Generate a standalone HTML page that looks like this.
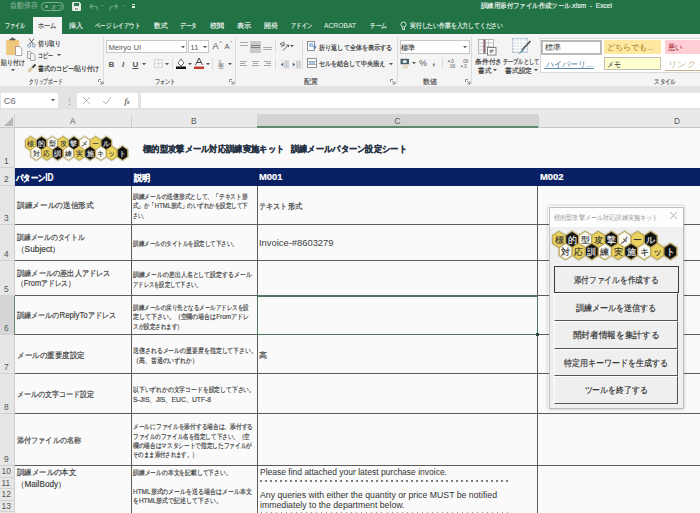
<!DOCTYPE html><html><head><meta charset="utf-8"><style>
html,body{margin:0;padding:0;}
body{width:700px;height:513px;overflow:hidden;position:relative;background:#fbfbfb;font-family:'Liberation Sans', sans-serif;}
.t{position:absolute;white-space:nowrap;-webkit-text-stroke:0.18px currentColor;}
.l{font-size:1.13em;}
.ns{-webkit-text-stroke:0;}
.r{position:absolute;box-sizing:border-box;}
svg{position:absolute;}
</style></head><body>
<div class="r" style="left:0px;top:0px;width:700px;height:34px;background:#217346;"></div>
<div class="t " id="f0" style="left:10px;top:1.26px;font-size:7.6px;line-height:9.879999999999999px;color:#79a98c;transform:scaleX(0.8625);transform-origin:0 50%;">自動保存</div>
<div class="r" style="left:41px;top:2px;width:23px;height:9px;border:1px solid #7fae93;border-radius:5px;"></div>
<div class="r" style="left:45px;top:5px;width:3px;height:3px;background:#7fae93;border-radius:50%;"></div>
<div class="t " style="left:51px;top:3.62px;font-size:5.5px;line-height:7.15px;color:#7fae93;">オフ</div>
<svg style="left:72px;top:2px" width="9" height="9"><path d="M0.5 0.5 H7.5 L8.5 1.5 V8.5 H0.5 Z" fill="#dcece2" stroke="#eef6f1" stroke-width="0.8"/><rect x="2" y="1" width="5" height="3" fill="#2e7a50"/><rect x="2" y="5.5" width="5" height="3" fill="#fff"/><rect x="3" y="6.5" width="3" height="1" fill="#444"/></svg>
<svg style="left:89px;top:3px" width="10" height="7"><path d="M3.5 0.8 L1 3.2 L3.5 5.6 M1.2 3.2 H6 a2.4 2.4 0 0 1 0 4.8 H5" fill="none" stroke="#6aa683" stroke-width="1.1"/></svg>
<svg style="left:109px;top:3px" width="10" height="7"><path d="M6 0.8 L8.5 3.2 L6 5.6 M8.3 3.2 H3.5 a2.4 2.4 0 0 0 0 4.8 H4.5" fill="none" stroke="#6aa683" stroke-width="1.1"/></svg>
<svg style="left:101.00px;top:4.67px" width="3" height="1.65"><path d="M0 0 H3 L1.5 1.65 Z" fill="#5e9a78"/></svg>
<svg style="left:121.50px;top:4.67px" width="3" height="1.65"><path d="M0 0 H3 L1.5 1.65 Z" fill="#5e9a78"/></svg>
<div class="r" style="left:131.5px;top:3.5px;width:3px;height:0.8px;background:#dfeee5;"></div>
<div class="r" style="left:131.5px;top:5.5px;width:3px;height:2.5px;background:#dfeee5;"></div>
<div class="t " id="f1" style="left:481px;top:1.05px;font-size:7.3px;line-height:9.49px;color:#e9f2ec;transform:scaleX(0.9135);transform-origin:0 50%;">訓練用添付ファイル作成ツール.xlsm&nbsp; - &nbsp;Excel</div>
<div class="r" style="left:33px;top:17px;width:29px;height:17px;background:#f4f4f4;"></div>
<div class="t " id="f2" style="left:5px;top:21.25px;font-size:7px;line-height:9.1px;color:#e6f0e9;transform:scaleX(0.7143);transform-origin:0 50%;">ファイル</div>
<div class="t " id="f3" style="left:38px;top:21.25px;font-size:7px;line-height:9.1px;color:#444;transform:scaleX(0.8810);transform-origin:0 50%;">ホーム</div>
<div class="t " id="f4" style="left:68.5px;top:21.25px;font-size:7px;line-height:9.1px;color:#e6f0e9;transform:scaleX(0.9857);transform-origin:0 50%;">挿入</div>
<div class="t " id="f5" style="left:95px;top:21.25px;font-size:7px;line-height:9.1px;color:#e6f0e9;transform:scaleX(0.7765);transform-origin:0 50%;">ページ レイアウト</div>
<div class="t " id="f6" style="left:153.5px;top:21.25px;font-size:7px;line-height:9.1px;color:#e6f0e9;transform:scaleX(0.9500);transform-origin:0 50%;">数式</div>
<div class="t " id="f7" style="left:180px;top:21.25px;font-size:7px;line-height:9.1px;color:#e6f0e9;transform:scaleX(0.8000);transform-origin:0 50%;">データ</div>
<div class="t " id="f8" style="left:209.5px;top:21.25px;font-size:7px;line-height:9.1px;color:#e6f0e9;transform:scaleX(1.0000);transform-origin:0 50%;">校閲</div>
<div class="t " id="f9" style="left:237px;top:21.25px;font-size:7px;line-height:9.1px;color:#e6f0e9;transform:scaleX(1.0000);transform-origin:0 50%;">表示</div>
<div class="t " id="f10" style="left:263.5px;top:21.25px;font-size:7px;line-height:9.1px;color:#e6f0e9;transform:scaleX(1.0000);transform-origin:0 50%;">開発</div>
<div class="t " id="f11" style="left:291px;top:21.25px;font-size:7px;line-height:9.1px;color:#e6f0e9;transform:scaleX(0.7500);transform-origin:0 50%;">アドイン</div>
<div class="t ns" id="f12" style="left:324px;top:21.25px;font-size:7px;line-height:9.1px;color:#e6f0e9;transform:scaleX(0.9602);transform-origin:0 50%;">ACROBAT</div>
<div class="t " id="f13" style="left:370px;top:21.25px;font-size:7px;line-height:9.1px;color:#e6f0e9;transform:scaleX(0.8095);transform-origin:0 50%;">チーム</div>
<svg style="left:400px;top:21px" width="7" height="10"><circle cx="3.5" cy="3.5" r="2.6" fill="none" stroke="#e6f0e9" stroke-width="0.9"/><path d="M2.5 6.5 V8.5 H4.5 V6.5" fill="none" stroke="#e6f0e9" stroke-width="0.9"/></svg>
<div class="t " id="f14" style="left:409.5px;top:21.25px;font-size:7px;line-height:9.1px;color:#e6f0e9;transform:scaleX(0.8304);transform-origin:0 50%;">実行したい作業を入力してください</div>
<div class="r" style="left:0px;top:34px;width:700px;height:52px;background:#f4f4f4;"></div>
<div class="r" style="left:0px;top:85.5px;width:700px;height:0.8px;background:#e0e0e0;"></div>
<div class="r" style="left:103px;top:37px;width:1px;height:47px;background:#dcdcdc;"></div>
<div class="r" style="left:235px;top:37px;width:1px;height:47px;background:#dcdcdc;"></div>
<div class="r" style="left:397px;top:37px;width:1px;height:47px;background:#dcdcdc;"></div>
<div class="r" style="left:471px;top:37px;width:1px;height:47px;background:#dcdcdc;"></div>
<div class="t " id="f15" style="left:29px;top:77.58px;font-size:6.8px;line-height:8.84px;color:#555;transform:scaleX(0.6837);transform-origin:0 50%;">クリップボード</div>
<div class="t " id="f16" style="left:165px;top:77.58px;font-size:6.8px;line-height:8.84px;color:#555;transform:translateX(-50%) scaleX(0.7500);transform-origin:50% 50%;">フォント</div>
<div class="t " id="f17" style="left:311px;top:77.58px;font-size:6.8px;line-height:8.84px;color:#555;transform:translateX(-50%) scaleX(1.0000);transform-origin:50% 50%;">配置</div>
<div class="t " id="f18" style="left:429.6px;top:77.58px;font-size:6.8px;line-height:8.84px;color:#555;transform:translateX(-50%) scaleX(1.0000);transform-origin:50% 50%;">数値</div>
<div class="t " id="f19" style="left:664.7px;top:77.58px;font-size:6.8px;line-height:8.84px;color:#555;transform:translateX(-50%) scaleX(0.7857);transform-origin:50% 50%;">スタイル</div>
<svg style="left:98px;top:79px" width="6" height="6"><path d="M0.5 0.5 H3 M0.5 0.5 V3 M2 2 L5 5 M5 2.5 V5 H2.5" fill="none" stroke="#777" stroke-width="0.8"/></svg>
<svg style="left:229px;top:79px" width="6" height="6"><path d="M0.5 0.5 H3 M0.5 0.5 V3 M2 2 L5 5 M5 2.5 V5 H2.5" fill="none" stroke="#777" stroke-width="0.8"/></svg>
<svg style="left:390px;top:79px" width="6" height="6"><path d="M0.5 0.5 H3 M0.5 0.5 V3 M2 2 L5 5 M5 2.5 V5 H2.5" fill="none" stroke="#777" stroke-width="0.8"/></svg>
<svg style="left:465px;top:79px" width="6" height="6"><path d="M0.5 0.5 H3 M0.5 0.5 V3 M2 2 L5 5 M5 2.5 V5 H2.5" fill="none" stroke="#777" stroke-width="0.8"/></svg>
<svg style="left:5px;top:37px" width="20" height="20"><rect x="1.2" y="3" width="13" height="15" fill="#f0c77c"/><path d="M4.5 3.2 H10.5 V1.8 H8.8 a1.3 1.3 0 0 0 -2.6 0 H4.5 Z" fill="#555"/><path d="M10.5 9.5 H14.5 L16.8 12 V18.5 H10.5 Z" fill="#fff" stroke="#8a8a8a" stroke-width="0.7"/></svg>
<div class="t " id="f20" style="left:0.5px;top:57.65px;font-size:7px;line-height:9.1px;color:#333;transform:scaleX(0.8393);transform-origin:0 50%;">貼り付け</div>
<svg style="left:11.00px;top:68.90px" width="4" height="2.20"><path d="M0 0 H4 L2.0 2.20 Z" fill="#555"/></svg>
<svg style="left:27px;top:37.5px" width="9" height="10"><path d="M2 0.5 L6.2 6 M7 0.5 L2.8 6" stroke="#555" stroke-width="0.9"/><circle cx="2.2" cy="7.6" r="1.5" fill="none" stroke="#6f8ca8" stroke-width="0.9"/><circle cx="6.8" cy="7.6" r="1.5" fill="none" stroke="#6f8ca8" stroke-width="0.9"/></svg>
<div class="t " id="f21" style="left:37.5px;top:38.65px;font-size:7px;line-height:9.1px;color:#333;transform:scaleX(0.8214);transform-origin:0 50%;">切り取り</div>
<svg style="left:27px;top:50.5px" width="9" height="10"><path d="M0.5 0.5 H3.5 L5 2 V7.5 H0.5 Z" fill="#eee" stroke="#8a8a8a" stroke-width="0.7"/><path d="M3.5 2.5 H6.5 L8 4 V9.5 H3.5 Z" fill="#f4f4f4" stroke="#8a8a8a" stroke-width="0.7"/></svg>
<div class="t " id="f22" style="left:37.5px;top:50.65px;font-size:7px;line-height:9.1px;color:#333;transform:scaleX(0.7143);transform-origin:0 50%;">コピー</div>
<svg style="left:56.50px;top:53.90px" width="4" height="2.20"><path d="M0 0 H4 L2.0 2.20 Z" fill="#555"/></svg>
<svg style="left:27px;top:63px" width="10" height="10"><path d="M1.5 8.5 L5.5 4.5" stroke="#d8c59a" stroke-width="2.6"/><path d="M5.5 4.5 L8.5 1.5" stroke="#3a3a3a" stroke-width="1.8"/></svg>
<div class="t " id="f23" style="left:37.5px;top:64.15px;font-size:7px;line-height:9.1px;color:#333;transform:scaleX(0.8478);transform-origin:0 50%;">書式のコピー/貼り付け</div>
<div class="r" style="left:106px;top:40px;width:81px;height:13px;background:#fff;border:1px solid #c6c6c6;"></div>
<div class="t ns" style="left:108.5px;top:43.06px;font-size:7.6px;line-height:9.879999999999999px;color:#555;">Meiryo UI</div>
<svg style="left:180.50px;top:45.70px" width="4" height="2.20"><path d="M0 0 H4 L2.0 2.20 Z" fill="#555"/></svg>
<div class="r" style="left:188px;top:40px;width:21px;height:13px;background:#fff;border:1px solid #c6c6c6;"></div>
<div class="t ns" style="left:190.5px;top:43.06px;font-size:7.6px;line-height:9.879999999999999px;color:#555;">11</div>
<svg style="left:202.50px;top:45.70px" width="4" height="2.20"><path d="M0 0 H4 L2.0 2.20 Z" fill="#555"/></svg>
<div class="t ns" style="left:212.5px;top:40.85px;font-size:9px;line-height:11.700000000000001px;color:#555;">A</div>
<div class="t ns" style="left:219.5px;top:40.45px;font-size:5px;line-height:6.5px;color:#555;">^</div>
<div class="t ns" style="left:224.5px;top:42.26px;font-size:7.6px;line-height:9.879999999999999px;color:#555;">A</div>
<div class="t ns" style="left:230.5px;top:40.45px;font-size:5px;line-height:6.5px;color:#555;">ˇ</div>
<div class="t ns" style="left:108.5px;top:60.00px;font-size:8px;line-height:10.4px;color:#555;font-weight:bold;">B</div>
<div class="t ns" style="left:122px;top:60.00px;font-size:8px;line-height:10.4px;color:#555;font-weight:bold;"><i>I</i></div>
<div class="t ns" style="left:132.5px;top:60.00px;font-size:8px;line-height:10.4px;color:#555;font-weight:bold;"><u>U</u></div>
<svg style="left:141.50px;top:62.90px" width="4" height="2.20"><path d="M0 0 H4 L2.0 2.20 Z" fill="#555"/></svg>
<svg style="left:154px;top:59px" width="9" height="9"><rect x="0.5" y="0.5" width="8" height="8" fill="none" stroke="#aaa" stroke-width="0.8" stroke-dasharray="1 1"/><path d="M4.5 0.5 V8.5 M0.5 4.5 H8.5" stroke="#bbb" stroke-width="0.8" stroke-dasharray="1 1"/></svg>
<svg style="left:164.50px;top:62.90px" width="4" height="2.20"><path d="M0 0 H4 L2.0 2.20 Z" fill="#555"/></svg>
<div class="r" style="left:172px;top:58px;width:1px;height:12px;background:#dcdcdc;"></div>
<svg style="left:176px;top:57px" width="10" height="12"><path d="M2 6 L5 2 L8 6 L5 9 Z" fill="#fff" stroke="#444" stroke-width="0.8"/><rect x="0" y="9.5" width="10" height="2.5" fill="#111"/></svg>
<svg style="left:187.50px;top:62.90px" width="4" height="2.20"><path d="M0 0 H4 L2.0 2.20 Z" fill="#555"/></svg>
<svg style="left:194px;top:57px" width="10" height="12"><path d="M1.5 8 L5 1 L8.5 8 M3 5.5 H7" fill="none" stroke="#444" stroke-width="1"/><rect x="0" y="9.5" width="10" height="2.5" fill="#c0392b"/></svg>
<svg style="left:205.50px;top:62.90px" width="4" height="2.20"><path d="M0 0 H4 L2.0 2.20 Z" fill="#555"/></svg>
<div class="r" style="left:212px;top:58px;width:1px;height:12px;background:#dcdcdc;"></div>
<div class="t ns" style="left:218.5px;top:58.45px;font-size:5px;line-height:6.5px;color:#777;">z</div>
<div class="t " style="left:217.5px;top:63.30px;font-size:6px;line-height:7.800000000000001px;color:#888;">亜</div>
<svg style="left:227.50px;top:62.90px" width="4" height="2.20"><path d="M0 0 H4 L2.0 2.20 Z" fill="#555"/></svg>
<div class="r" style="left:249.5px;top:40.5px;width:11.5px;height:12px;background:#c9c9c9;"></div>
<div class="r" style="left:239.5px;top:42px;width:8.5px;height:1.2px;background:#aaa;"></div>
<div class="r" style="left:239.5px;top:44.6px;width:8.5px;height:1.2px;background:#aaa;"></div>
<div class="r" style="left:250.5px;top:44.5px;width:9.5px;height:1.2px;background:#808080;"></div>
<div class="r" style="left:250.5px;top:47.1px;width:9.5px;height:1.2px;background:#808080;"></div>
<div class="r" style="left:263px;top:46.5px;width:9px;height:1.2px;background:#aaa;"></div>
<div class="r" style="left:263px;top:49.1px;width:9px;height:1.2px;background:#aaa;"></div>
<svg style="left:279px;top:41px" width="11" height="10"><path d="M1 3 L5 1 L5 5 Z M2 6 L6 3" fill="none" stroke="#666" stroke-width="0.9"/><path d="M4 9.5 L9.5 4 M7.5 4 H9.5 V6" fill="none" stroke="#555" stroke-width="1"/></svg>
<svg style="left:290.20px;top:45.10px" width="4" height="2.20"><path d="M0 0 H4 L2.0 2.20 Z" fill="#555"/></svg>
<div class="r" style="left:275.3px;top:40px;width:0.8px;height:13px;background:#dcdcdc;"></div>
<div class="r" style="left:275.3px;top:58px;width:0.8px;height:12px;background:#dcdcdc;"></div>
<div class="r" style="left:302px;top:41px;width:0.8px;height:29px;background:#dcdcdc;"></div>
<div class="r" style="left:240px;top:61px;width:7px;height:1.2px;background:#a6a6a6;"></div>
<div class="r" style="left:240px;top:63px;width:5px;height:1.2px;background:#a6a6a6;"></div>
<div class="r" style="left:240px;top:65px;width:7px;height:1.2px;background:#a6a6a6;"></div>
<div class="r" style="left:252.0px;top:61px;width:7px;height:1.2px;background:#a6a6a6;"></div>
<div class="r" style="left:253.0px;top:63px;width:5px;height:1.2px;background:#a6a6a6;"></div>
<div class="r" style="left:252.0px;top:65px;width:7px;height:1.2px;background:#a6a6a6;"></div>
<div class="r" style="left:264px;top:61px;width:7px;height:1.2px;background:#a6a6a6;"></div>
<div class="r" style="left:266px;top:63px;width:5px;height:1.2px;background:#a6a6a6;"></div>
<div class="r" style="left:264px;top:65px;width:7px;height:1.2px;background:#a6a6a6;"></div>
<svg style="left:279.5px;top:59.5px" width="9" height="9"><rect x="0" y="0.5" width="9" height="8" fill="#d2d2d2"/><rect x="0" y="0.5" width="4" height="8" fill="#f2f2f2"/><path d="M3.2 2.5 L0.8 4.5 L3.2 6.5 Z" fill="#4a6a8a"/></svg>
<svg style="left:292px;top:59.5px" width="9" height="9"><rect x="0" y="0.5" width="9" height="8" fill="#d2d2d2"/><rect x="0" y="0.5" width="4" height="8" fill="#f2f2f2"/><path d="M0.8 2.5 L3.2 4.5 L0.8 6.5 Z" fill="#4a6a8a"/></svg>
<svg style="left:307px;top:41px" width="10" height="11"><rect x="0.5" y="0.5" width="7" height="9" fill="#fff" stroke="#777" stroke-width="0.8"/><path d="M2 3 H6 M2 5 H8 a1 1 0 0 1 0 2 H6" fill="none" stroke="#2a6ebd" stroke-width="0.8"/></svg>
<div class="t " id="f24" style="left:318.5px;top:42.85px;font-size:7px;line-height:9.1px;color:#333;transform:scaleX(0.8750);transform-origin:0 50%;">折り返して全体を表示する</div>
<svg style="left:307px;top:58px" width="10" height="11"><rect x="0.5" y="0.5" width="9" height="9" fill="#fff" stroke="#777" stroke-width="0.8"/><path d="M0.5 3.5 H9.5 M0.5 6.5 H9.5" stroke="#999" stroke-width="0.8"/><path d="M2 5 H8" stroke="#2a6ebd" stroke-width="0.8"/></svg>
<div class="t " id="f25" style="left:319px;top:59.25px;font-size:7px;line-height:9.1px;color:#333;transform:scaleX(0.8636);transform-origin:0 50%;">セルを結合して中央揃え</div>
<svg style="left:388.50px;top:62.50px" width="4" height="2.20"><path d="M0 0 H4 L2.0 2.20 Z" fill="#555"/></svg>
<div class="r" style="left:399.5px;top:40px;width:70px;height:14px;background:#fff;border:1px solid #c6c6c6;"></div>
<div class="t " style="left:401px;top:43.91px;font-size:6.6px;line-height:8.58px;color:#444;">標準</div>
<svg style="left:462.50px;top:45.90px" width="4" height="2.20"><path d="M0 0 H4 L2.0 2.20 Z" fill="#555"/></svg>
<svg style="left:400px;top:58px" width="10" height="11"><rect x="0.5" y="0.8" width="8.5" height="5.5" fill="#46606e"/><ellipse cx="4.75" cy="3.55" rx="2.2" ry="1.4" fill="#fff"/><rect x="3" y="6.5" width="5" height="4" fill="#e9dcc0"/></svg>
<svg style="left:411.50px;top:61.90px" width="4" height="2.20"><path d="M0 0 H4 L2.0 2.20 Z" fill="#555"/></svg>
<div class="t ns" style="left:419px;top:58.35px;font-size:9px;line-height:11.700000000000001px;color:#555;">%</div>
<div class="t ns" style="left:432.5px;top:56.65px;font-size:9px;line-height:11.700000000000001px;color:#444;font-weight:bold;">,</div>
<div class="r" style="left:441.5px;top:58px;width:0.8px;height:12px;background:#dcdcdc;"></div>
<svg style="left:447px;top:58px" width="9" height="11"><path d="M0.5 3.2 L2.5 2 L2.5 4.4 Z" fill="#4a6a8a"/><text x="3" y="5" font-size="4.5" fill="#555" font-family="Liberation Sans">.0</text><text x="2" y="10" font-size="4.5" fill="#555" font-family="Liberation Sans">.00</text></svg>
<svg style="left:460px;top:58px" width="10" height="11"><text x="2" y="5" font-size="4.5" fill="#555" font-family="Liberation Sans">.00</text><path d="M0.5 8.2 L2.5 7 L2.5 9.4 Z" fill="#4a6a8a"/><text x="3" y="10" font-size="4.5" fill="#555" font-family="Liberation Sans">.0</text></svg>
<svg style="left:478px;top:39px" width="20" height="17"><rect x="0.5" y="0.5" width="15" height="14" fill="#fafafa" stroke="#9a9a9a" stroke-width="0.7"/><path d="M0.5 4 H15.5 M0.5 7.5 H15.5 M0.5 11 H15.5 M5.5 0.5 V14.5 M10.5 0.5 V14.5" stroke="#b8b8b8" stroke-width="0.7"/><rect x="5.5" y="0.5" width="2" height="14" fill="#8a6670"/><rect x="9.5" y="8.5" width="8.5" height="7.5" fill="#fff" stroke="#666" stroke-width="0.8"/><path d="M12 14 L15 10 M11.5 11.5 H15.5 M11.5 13 H15.5" stroke="#444" stroke-width="0.6"/></svg>
<div class="t " id="f26" style="left:474.5px;top:57.45px;font-size:7px;line-height:9.1px;color:#3c3c3c;transform:scaleX(0.9643);transform-origin:0 50%;">条件付き</div>
<div class="t " id="f27" style="left:478px;top:65.65px;font-size:7px;line-height:9.1px;color:#3c3c3c;transform:scaleX(0.9286);transform-origin:0 50%;">書式</div>
<svg style="left:493.00px;top:68.90px" width="4" height="2.20"><path d="M0 0 H4 L2.0 2.20 Z" fill="#555"/></svg>
<svg style="left:512px;top:38px" width="20" height="18"><rect x="0.5" y="0.5" width="15" height="14" fill="#e4e9f0" stroke="#a9b6c8" stroke-width="0.7"/><path d="M0.5 3.5 H15.5 M0.5 6.5 H15.5 M0.5 9.5 H15.5 M0.5 12.5 H15.5 M4 0.5 V14.5 M7.5 0.5 V14.5 M11 0.5 V14.5" stroke="#fff" stroke-width="0.8"/><path d="M10 12 L18.5 3" stroke="#555" stroke-width="1.8"/><path d="M6 16.5 L10.5 11 L12 13 Z" fill="#6c94a8"/></svg>
<div class="t " id="f28" style="left:502.5px;top:57.45px;font-size:7px;line-height:9.1px;color:#3c3c3c;transform:scaleX(0.7347);transform-origin:0 50%;">テーブルとして</div>
<div class="t " id="f29" style="left:504.6px;top:65.65px;font-size:7px;line-height:9.1px;color:#3c3c3c;transform:scaleX(0.9643);transform-origin:0 50%;">書式設定</div>
<svg style="left:534.00px;top:68.90px" width="4" height="2.20"><path d="M0 0 H4 L2.0 2.20 Z" fill="#555"/></svg>
<div class="r" style="left:539.5px;top:38px;width:161px;height:35px;background:#fff;border:1px solid #d8d8d8;"></div>
<div class="r" style="left:541px;top:39.5px;width:60.5px;height:15px;background:#fff;border:2px solid #b9b9b9;"></div>
<div class="t ns" id="f30" style="left:545px;top:42.60px;font-size:8px;line-height:10.4px;color:#3a3a3a;transform:scaleX(1.0000);transform-origin:0 50%;">標準</div>
<div class="r" style="left:603.5px;top:40px;width:57px;height:14px;background:#ffe9a0;"></div>
<div class="t ns" id="f31" style="left:607px;top:42.60px;font-size:8px;line-height:10.4px;color:#9c7010;transform:scaleX(1.0070);transform-origin:0 50%;">どちらでも...</div>
<div class="r" style="left:664.5px;top:40px;width:40px;height:14px;background:#ffcdd3;"></div>
<div class="t ns" id="f32" style="left:668px;top:42.60px;font-size:8px;line-height:10.4px;color:#9c1020;transform:scaleX(0.9062);transform-origin:0 50%;">悪い</div>
<div class="t ns" id="f33" style="left:545.6px;top:59.60px;font-size:8px;line-height:10.4px;color:#4a7a9a;transform:scaleX(1.0070);transform-origin:0 50%;">ハイパーリ...</div>
<div class="r" style="left:544px;top:68.2px;width:50px;height:1px;background:#5a8aaa;"></div>
<div class="r" style="left:603.5px;top:56.5px;width:57px;height:13px;background:#ffffd0;border:1px solid #c0c0b0;"></div>
<div class="t ns" id="f34" style="left:607px;top:59.60px;font-size:8px;line-height:10.4px;color:#333;transform:scaleX(0.8750);transform-origin:0 50%;">メモ</div>
<div class="t ns" id="f35" style="left:668px;top:59.60px;font-size:8px;line-height:10.4px;color:#cdb28a;transform:scaleX(1.1684);transform-origin:0 50%;">リンク セ</div>
<div class="r" style="left:665px;top:69.5px;width:40px;height:1.5px;background:#cbb08a;"></div>
<div class="r" style="left:0px;top:86px;width:700px;height:28px;background:#e3e3e3;"></div>
<div class="r" style="left:1px;top:93px;width:57px;height:15px;background:#fff;"></div>
<div class="t ns" style="left:3.8px;top:96.22px;font-size:9.2px;line-height:11.959999999999999px;color:#6a6a6a;">C6</div>
<svg style="left:50.50px;top:99.40px" width="4" height="2.20"><path d="M0 0 H4 L2.0 2.20 Z" fill="#555"/></svg>
<div class="t " style="left:65.5px;top:97.15px;font-size:7px;line-height:9.1px;color:#888;">⋮</div>
<div class="r" style="left:77px;top:93px;width:61px;height:15px;background:#fff;"></div>
<svg style="left:82px;top:96px" width="9" height="9"><path d="M1 1 L8 8 M8 1 L1 8" stroke="#b0b0b0" stroke-width="0.9"/></svg>
<svg style="left:102px;top:96px" width="10" height="9"><path d="M1 5 L4 8 L9 1" fill="none" stroke="#b0b0b0" stroke-width="0.9"/></svg>
<div class="t " style="left:124.5px;top:96.17px;font-size:8.5px;line-height:11.05px;color:#555;"><i style="font-family:Liberation Serif">f</i><span style="font-size:5px"><i>x</i></span></div>
<div class="r" style="left:141px;top:93px;width:559px;height:15px;background:#fff;"></div>
<div class="r" style="left:0px;top:109.5px;width:700px;height:18.5px;background:#e9e9e9;"></div>
<div class="r" style="left:0px;top:127px;width:700px;height:1px;background:#c8c8c8;"></div>
<div class="r" style="left:14px;top:114px;width:1px;height:14px;background:#d0d0d0;"></div>
<div class="r" style="left:131px;top:116px;width:1px;height:11px;background:#cfcfcf;"></div>
<div class="r" style="left:257px;top:114px;width:281px;height:13px;background:#d3d3d3;"></div>
<div class="r" style="left:257px;top:126.3px;width:281px;height:1.7px;background:#5f8a70;"></div>
<div class="r" style="left:538px;top:116px;width:1px;height:11px;background:#cfcfcf;"></div>
<svg style="left:2px;top:116px" width="12" height="11"><path d="M11 1 V10 H2 Z" fill="#b5b5b5"/></svg>
<div class="t ns" style="left:70px;top:115.64px;font-size:8.4px;line-height:10.920000000000002px;color:#5a5a5a;">A</div>
<div class="t ns" style="left:191px;top:115.64px;font-size:8.4px;line-height:10.920000000000002px;color:#5a5a5a;">B</div>
<div class="t ns" style="left:394.5px;top:115.64px;font-size:8.4px;line-height:10.920000000000002px;color:#5a5a5a;">C</div>
<div class="t ns" style="left:674px;top:115.64px;font-size:8.4px;line-height:10.920000000000002px;color:#5a5a5a;">D</div>
<div class="r" style="left:0px;top:128px;width:15px;height:385px;background:#e6e6e6;"></div>
<div class="r" style="left:14px;top:128px;width:1px;height:385px;background:#cfcfcf;"></div>
<div class="r" style="left:0px;top:167px;width:14px;height:1px;background:#d2d2d2;"></div>
<div class="t ns" style="left:4px;top:155.74px;font-size:8.4px;line-height:10.920000000000002px;color:#555;">1</div>
<div class="r" style="left:0px;top:185px;width:14px;height:1px;background:#d2d2d2;"></div>
<div class="t ns" style="left:4px;top:173.74px;font-size:8.4px;line-height:10.920000000000002px;color:#555;">2</div>
<div class="r" style="left:0px;top:224px;width:14px;height:1px;background:#d2d2d2;"></div>
<div class="t ns" style="left:4px;top:212.74px;font-size:8.4px;line-height:10.920000000000002px;color:#555;">3</div>
<div class="r" style="left:0px;top:260px;width:14px;height:1px;background:#d2d2d2;"></div>
<div class="t ns" style="left:4px;top:248.74px;font-size:8.4px;line-height:10.920000000000002px;color:#555;">4</div>
<div class="r" style="left:0px;top:295px;width:14px;height:1px;background:#d2d2d2;"></div>
<div class="t ns" style="left:4px;top:283.74px;font-size:8.4px;line-height:10.920000000000002px;color:#555;">5</div>
<div class="r" style="left:0px;top:296px;width:14px;height:39px;background:#d6d6d6;"></div>
<div class="r" style="left:13.5px;top:296px;width:1.5px;height:39px;background:#5f8a70;"></div>
<div class="r" style="left:0px;top:334px;width:14px;height:1px;background:#d2d2d2;"></div>
<div class="t ns" style="left:4px;top:322.74px;font-size:8.4px;line-height:10.920000000000002px;color:#4d6a5c;">6</div>
<div class="r" style="left:0px;top:373px;width:14px;height:1px;background:#d2d2d2;"></div>
<div class="t ns" style="left:4px;top:361.74px;font-size:8.4px;line-height:10.920000000000002px;color:#555;">7</div>
<div class="r" style="left:0px;top:413px;width:14px;height:1px;background:#d2d2d2;"></div>
<div class="t ns" style="left:4px;top:401.74px;font-size:8.4px;line-height:10.920000000000002px;color:#555;">8</div>
<div class="r" style="left:0px;top:465px;width:14px;height:1px;background:#d2d2d2;"></div>
<div class="t ns" style="left:4px;top:453.74px;font-size:8.4px;line-height:10.920000000000002px;color:#555;">9</div>
<div class="r" style="left:0px;top:476.5px;width:14px;height:1px;background:#d2d2d2;"></div>
<div class="t ns" style="left:1.5px;top:466.04px;font-size:8.4px;line-height:10.920000000000002px;color:#555;">10</div>
<div class="r" style="left:0px;top:488px;width:14px;height:1px;background:#d2d2d2;"></div>
<div class="t ns" style="left:1.5px;top:477.54px;font-size:8.4px;line-height:10.920000000000002px;color:#555;">11</div>
<div class="r" style="left:0px;top:499.5px;width:14px;height:1px;background:#d2d2d2;"></div>
<div class="t ns" style="left:1.5px;top:489.04px;font-size:8.4px;line-height:10.920000000000002px;color:#555;">12</div>
<div class="r" style="left:0px;top:511px;width:14px;height:1px;background:#d2d2d2;"></div>
<div class="t ns" style="left:1.5px;top:500.54px;font-size:8.4px;line-height:10.920000000000002px;color:#555;">13</div>
<div class="r" style="left:15px;top:128px;width:685px;height:385px;background:#fafafa;"></div>
<div class="r" style="left:15px;top:168px;width:685px;height:18px;background:#0a2064;"></div>
<div class="r" style="left:257px;top:168px;width:1px;height:18px;background:#08174a;"></div>
<div class="r" style="left:131px;top:168px;width:1px;height:18px;background:#08174a;"></div>
<div class="t " id="f36" style="left:16.4px;top:172.35px;font-size:9px;line-height:11.700000000000001px;color:#fff;font-weight:bold;transform:scaleX(0.8125);transform-origin:0 50%;">パターン<span class="l">ID</span></div>
<div class="t " id="f37" style="left:133.5px;top:172.61px;font-size:8.6px;line-height:11.18px;color:#fff;font-weight:bold;transform:scaleX(0.9167);transform-origin:0 50%;">説明</div>
<div class="t " id="f38" style="left:259.4px;top:172.48px;font-size:8.8px;line-height:11.440000000000001px;color:#fff;font-weight:bold;transform:scaleX(1.0674);transform-origin:0 50%;">M001</div>
<div class="t " id="f39" style="left:540px;top:172.48px;font-size:8.8px;line-height:11.440000000000001px;color:#fff;font-weight:bold;transform:scaleX(1.0674);transform-origin:0 50%;">M002</div>
<div class="r" style="left:15px;top:224px;width:685px;height:1px;background:#5c5c5c;"></div>
<div class="r" style="left:15px;top:260px;width:685px;height:1px;background:#5c5c5c;"></div>
<div class="r" style="left:15px;top:295px;width:685px;height:1px;background:#5c5c5c;"></div>
<div class="r" style="left:15px;top:334px;width:685px;height:1px;background:#5c5c5c;"></div>
<div class="r" style="left:15px;top:373px;width:685px;height:1px;background:#5c5c5c;"></div>
<div class="r" style="left:15px;top:413px;width:685px;height:1px;background:#5c5c5c;"></div>
<div class="r" style="left:15px;top:465px;width:685px;height:1px;background:#5c5c5c;"></div>
<div class="r" style="left:131px;top:186px;width:1px;height:327px;background:#5c5c5c;"></div>
<div class="r" style="left:257px;top:186px;width:1px;height:327px;background:#5c5c5c;"></div>
<div class="r" style="left:537px;top:186px;width:1px;height:327px;background:#5c5c5c;"></div>
<div class="r" style="left:257px;top:295px;width:281px;height:1.6px;background:#4d7a5f;"></div>
<div class="r" style="left:257px;top:333.5px;width:281px;height:1.6px;background:#4d7a5f;"></div>
<div class="r" style="left:256.6px;top:295px;width:1.6px;height:40px;background:#4d7a5f;"></div>
<div class="r" style="left:536.5px;top:295px;width:1.6px;height:40px;background:#4d7a5f;"></div>
<div class="r" style="left:535.5px;top:332.5px;width:3px;height:3px;background:#2d4a3a;"></div>
<div class="t " id="f40" style="left:16.5px;top:201.13px;font-size:7.8px;line-height:10.14px;color:#404040;transform:scaleX(0.9563);transform-origin:0 50%;">訓練メールの送信形式</div>
<div class="t " id="f41" style="left:16.5px;top:232.93px;font-size:7.8px;line-height:10.14px;color:#404040;transform:scaleX(0.8438);transform-origin:0 50%;">訓練メールのタイトル</div>
<div class="t " id="f42" style="left:16.5px;top:243.53px;font-size:7.8px;line-height:10.14px;color:#404040;transform:scaleX(0.9483);transform-origin:0 50%;">（<span class="l">Subject</span>）</div>
<div class="t " id="f43" style="left:16.5px;top:268.63px;font-size:7.8px;line-height:10.14px;color:#404040;transform:scaleX(0.8990);transform-origin:0 50%;">訓練メールの差出人アドレス</div>
<div class="t " id="f44" style="left:16.5px;top:278.43px;font-size:7.8px;line-height:10.14px;color:#404040;transform:scaleX(0.8463);transform-origin:0 50%;">（<span class="l">From</span>アドレス）</div>
<div class="t " id="f45" style="left:16.5px;top:310.33px;font-size:7.8px;line-height:10.14px;color:#404040;transform:scaleX(0.8857);transform-origin:0 50%;">訓練メールの<span class="l">ReplyTo</span>アドレス</div>
<div class="t " id="f46" style="left:16.5px;top:350.73px;font-size:7.8px;line-height:10.14px;color:#404040;transform:scaleX(0.9444);transform-origin:0 50%;">メールの重要度設定</div>
<div class="t " id="f47" style="left:16.5px;top:389.73px;font-size:7.8px;line-height:10.14px;color:#404040;transform:scaleX(0.8807);transform-origin:0 50%;">メールの文字コード設定</div>
<div class="t " id="f48" style="left:16.5px;top:436.13px;font-size:7.8px;line-height:10.14px;color:#404040;transform:scaleX(0.8889);transform-origin:0 50%;">添付ファイルの名称</div>
<div class="t " id="f49" style="left:16.5px;top:467.93px;font-size:7.8px;line-height:10.14px;color:#404040;transform:scaleX(0.9250);transform-origin:0 50%;">訓練メールの本文</div>
<div class="t " id="f50" style="left:16.5px;top:478.73px;font-size:7.8px;line-height:10.14px;color:#404040;transform:scaleX(0.9293);transform-origin:0 50%;">（<span class="l">MailBody</span>）</div>
<div class="t " id="f51" style="left:133px;top:191.70px;font-size:6.7px;line-height:9.4px;color:#444;transform:scaleX(0.8179);transform-origin:0 50%;">訓練メールの送信形式として、「テキスト形</div>
<div class="t " id="f52" style="left:133px;top:201.10px;font-size:6.7px;line-height:9.4px;color:#444;transform:scaleX(0.7811);transform-origin:0 50%;">式」か「<span class="l">HTML</span>形式」のいずれかを設定して下</div>
<div class="t " id="f53" style="left:133px;top:210.50px;font-size:6.7px;line-height:9.4px;color:#444;transform:scaleX(0.6667);transform-origin:0 50%;">さい。</div>
<div class="t " id="f54" style="left:133px;top:239.20px;font-size:6.7px;line-height:9.4px;color:#444;transform:scaleX(0.7895);transform-origin:0 50%;">訓練メールのタイトルを設定して下さい。</div>
<div class="t " id="f55" style="left:133px;top:269.90px;font-size:6.7px;line-height:10px;color:#444;transform:scaleX(0.8500);transform-origin:0 50%;">訓練メールの差出人名として設定するメール</div>
<div class="t " id="f56" style="left:133px;top:279.90px;font-size:6.7px;line-height:10px;color:#444;transform:scaleX(0.7527);transform-origin:0 50%;">アドレスを設定して下さい。</div>
<div class="t " id="f57" style="left:133px;top:302.70px;font-size:6.7px;line-height:9.4px;color:#444;transform:scaleX(0.7891);transform-origin:0 50%;">訓練メールの戻り先となるメールアドレスを設</div>
<div class="t " id="f58" style="left:133px;top:312.10px;font-size:6.7px;line-height:9.4px;color:#444;transform:scaleX(0.8488);transform-origin:0 50%;">定して下さい。（空欄の場合は<span class="l">From</span>アドレ</div>
<div class="t " id="f59" style="left:133px;top:321.50px;font-size:6.7px;line-height:9.4px;color:#444;transform:scaleX(0.7937);transform-origin:0 50%;">スが設定されます）</div>
<div class="t " id="f60" style="left:133px;top:346.30px;font-size:6.7px;line-height:9.4px;color:#444;transform:scaleX(0.8435);transform-origin:0 50%;">送信されるメールの重要度を指定して下さい。</div>
<div class="t " id="f61" style="left:133px;top:355.70px;font-size:6.7px;line-height:9.4px;color:#444;transform:scaleX(0.8442);transform-origin:0 50%;">（高、普通のいずれか）</div>
<div class="t " id="f62" style="left:133px;top:385.40px;font-size:6.7px;line-height:9.4px;color:#444;transform:scaleX(0.8299);transform-origin:0 50%;">以下いずれかの文字コードを設定して下さい。</div>
<div class="t " id="f63" style="left:133px;top:394.80px;font-size:6.7px;line-height:9.4px;color:#444;transform:scaleX(0.8879);transform-origin:0 50%;"><span class="l">S-JIS</span>、<span class="l">JIS</span>、<span class="l">EUC</span>、<span class="l">UTF-8</span></div>
<div class="t " id="f64" style="left:133px;top:422.10px;font-size:6.7px;line-height:9.4px;color:#444;transform:scaleX(0.8163);transform-origin:0 50%;">メールにファイルを添付する場合は、添付する</div>
<div class="t " id="f65" style="left:133px;top:431.50px;font-size:6.7px;line-height:9.4px;color:#444;transform:scaleX(0.7959);transform-origin:0 50%;">ファイルのファイル名を指定して下さい。（空</div>
<div class="t " id="f66" style="left:133px;top:440.90px;font-size:6.7px;line-height:9.4px;color:#444;transform:scaleX(0.8095);transform-origin:0 50%;">欄の場合はマスタシートで指定したファイルが</div>
<div class="t " id="f67" style="left:133px;top:450.30px;font-size:6.7px;line-height:9.4px;color:#444;transform:scaleX(0.7679);transform-origin:0 50%;">そのまま添付されます。）</div>
<div class="t " id="f68" style="left:133px;top:467.90px;font-size:6.7px;line-height:9.4px;color:#444;transform:scaleX(0.8277);transform-origin:0 50%;">訓練メールの本文を記載して下さい。</div>
<div class="t " id="f69" style="left:133px;top:486.70px;font-size:6.7px;line-height:9.4px;color:#444;transform:scaleX(0.8525);transform-origin:0 50%;"><span class="l">HTML</span>形式のメールを送る場合はメール本文</div>
<div class="t " id="f70" style="left:133px;top:496.10px;font-size:6.7px;line-height:9.4px;color:#444;transform:scaleX(0.8461);transform-origin:0 50%;">を<span class="l">HTML</span>形式で記述して下さい。</div>
<div class="t " id="f71" style="left:259px;top:201.14px;font-size:8.4px;line-height:10.920000000000002px;color:#404040;transform:scaleX(0.8958);transform-origin:0 50%;">テキスト形式</div>
<div class="t ns" id="f72" style="left:259.4px;top:237.98px;font-size:8.8px;line-height:11.440000000000001px;color:#404040;transform:scaleX(1.0650);transform-origin:0 50%;">Invoice-#8603279</div>
<div class="t " style="left:259px;top:350.04px;font-size:8.4px;line-height:10.920000000000002px;color:#404040;">高</div>
<div class="t ns" id="f73" style="left:259.6px;top:467.34px;font-size:8.4px;line-height:10.920000000000002px;color:#333;transform:scaleX(1.0142);transform-origin:0 50%;">Please find attached your latest purchase invoice.</div>
<div class="r" style="left:260.00px;top:479.6px;width:2px;height:2px;border-radius:1px;background:#555"></div><div class="r" style="left:265.03px;top:479.6px;width:2px;height:2px;border-radius:1px;background:#555"></div><div class="r" style="left:270.06px;top:479.6px;width:2px;height:2px;border-radius:1px;background:#555"></div><div class="r" style="left:275.09px;top:479.6px;width:2px;height:2px;border-radius:1px;background:#555"></div><div class="r" style="left:280.12px;top:479.6px;width:2px;height:2px;border-radius:1px;background:#555"></div><div class="r" style="left:285.15px;top:479.6px;width:2px;height:2px;border-radius:1px;background:#555"></div><div class="r" style="left:290.18px;top:479.6px;width:2px;height:2px;border-radius:1px;background:#555"></div><div class="r" style="left:295.21px;top:479.6px;width:2px;height:2px;border-radius:1px;background:#555"></div><div class="r" style="left:300.24px;top:479.6px;width:2px;height:2px;border-radius:1px;background:#555"></div><div class="r" style="left:305.27px;top:479.6px;width:2px;height:2px;border-radius:1px;background:#555"></div><div class="r" style="left:310.30px;top:479.6px;width:2px;height:2px;border-radius:1px;background:#555"></div><div class="r" style="left:315.33px;top:479.6px;width:2px;height:2px;border-radius:1px;background:#555"></div><div class="r" style="left:320.36px;top:479.6px;width:2px;height:2px;border-radius:1px;background:#555"></div><div class="r" style="left:325.39px;top:479.6px;width:2px;height:2px;border-radius:1px;background:#555"></div><div class="r" style="left:330.42px;top:479.6px;width:2px;height:2px;border-radius:1px;background:#555"></div><div class="r" style="left:335.45px;top:479.6px;width:2px;height:2px;border-radius:1px;background:#555"></div><div class="r" style="left:340.48px;top:479.6px;width:2px;height:2px;border-radius:1px;background:#555"></div><div class="r" style="left:345.51px;top:479.6px;width:2px;height:2px;border-radius:1px;background:#555"></div><div class="r" style="left:350.54px;top:479.6px;width:2px;height:2px;border-radius:1px;background:#555"></div><div class="r" style="left:355.57px;top:479.6px;width:2px;height:2px;border-radius:1px;background:#555"></div><div class="r" style="left:360.60px;top:479.6px;width:2px;height:2px;border-radius:1px;background:#555"></div><div class="r" style="left:365.63px;top:479.6px;width:2px;height:2px;border-radius:1px;background:#555"></div><div class="r" style="left:370.66px;top:479.6px;width:2px;height:2px;border-radius:1px;background:#555"></div><div class="r" style="left:375.69px;top:479.6px;width:2px;height:2px;border-radius:1px;background:#555"></div><div class="r" style="left:380.72px;top:479.6px;width:2px;height:2px;border-radius:1px;background:#555"></div><div class="r" style="left:385.75px;top:479.6px;width:2px;height:2px;border-radius:1px;background:#555"></div><div class="r" style="left:390.78px;top:479.6px;width:2px;height:2px;border-radius:1px;background:#555"></div><div class="r" style="left:395.81px;top:479.6px;width:2px;height:2px;border-radius:1px;background:#555"></div><div class="r" style="left:400.84px;top:479.6px;width:2px;height:2px;border-radius:1px;background:#555"></div><div class="r" style="left:405.87px;top:479.6px;width:2px;height:2px;border-radius:1px;background:#555"></div><div class="r" style="left:410.90px;top:479.6px;width:2px;height:2px;border-radius:1px;background:#555"></div><div class="r" style="left:415.93px;top:479.6px;width:2px;height:2px;border-radius:1px;background:#555"></div><div class="r" style="left:420.96px;top:479.6px;width:2px;height:2px;border-radius:1px;background:#555"></div><div class="r" style="left:425.99px;top:479.6px;width:2px;height:2px;border-radius:1px;background:#555"></div><div class="r" style="left:431.02px;top:479.6px;width:2px;height:2px;border-radius:1px;background:#555"></div><div class="r" style="left:436.05px;top:479.6px;width:2px;height:2px;border-radius:1px;background:#555"></div><div class="r" style="left:441.08px;top:479.6px;width:2px;height:2px;border-radius:1px;background:#555"></div><div class="r" style="left:446.11px;top:479.6px;width:2px;height:2px;border-radius:1px;background:#555"></div><div class="r" style="left:451.14px;top:479.6px;width:2px;height:2px;border-radius:1px;background:#555"></div><div class="r" style="left:456.17px;top:479.6px;width:2px;height:2px;border-radius:1px;background:#555"></div><div class="r" style="left:461.20px;top:479.6px;width:2px;height:2px;border-radius:1px;background:#555"></div><div class="r" style="left:466.23px;top:479.6px;width:2px;height:2px;border-radius:1px;background:#555"></div><div class="r" style="left:471.26px;top:479.6px;width:2px;height:2px;border-radius:1px;background:#555"></div><div class="r" style="left:476.29px;top:479.6px;width:2px;height:2px;border-radius:1px;background:#555"></div><div class="r" style="left:481.32px;top:479.6px;width:2px;height:2px;border-radius:1px;background:#555"></div><div class="r" style="left:486.35px;top:479.6px;width:2px;height:2px;border-radius:1px;background:#555"></div><div class="r" style="left:491.38px;top:479.6px;width:2px;height:2px;border-radius:1px;background:#555"></div><div class="r" style="left:496.41px;top:479.6px;width:2px;height:2px;border-radius:1px;background:#555"></div><div class="r" style="left:501.44px;top:479.6px;width:2px;height:2px;border-radius:1px;background:#555"></div><div class="r" style="left:506.47px;top:479.6px;width:2px;height:2px;border-radius:1px;background:#555"></div>
<div class="t ns" id="f74" style="left:259.6px;top:489.74px;font-size:8.4px;line-height:10.920000000000002px;color:#333;transform:scaleX(1.0418);transform-origin:0 50%;">Any queries with either the quantity or price MUST be notified</div>
<div class="t ns" id="f75" style="left:259.6px;top:500.14px;font-size:8.4px;line-height:10.920000000000002px;color:#333;transform:scaleX(1.0416);transform-origin:0 50%;">immediately to the department below.</div>
<div class="r" style="left:260.5px;top:511.5px;width:1px;height:1px;background:#9a9a9a;"></div>
<div class="r" style="left:265.54px;top:511.5px;width:1px;height:1px;background:#9a9a9a;"></div>
<div class="r" style="left:270.58px;top:511.5px;width:1px;height:1px;background:#9a9a9a;"></div>
<div class="r" style="left:275.62px;top:511.5px;width:1px;height:1px;background:#9a9a9a;"></div>
<div class="r" style="left:280.66px;top:511.5px;width:1px;height:1px;background:#9a9a9a;"></div>
<div class="r" style="left:285.7px;top:511.5px;width:1px;height:1px;background:#9a9a9a;"></div>
<div class="r" style="left:290.74px;top:511.5px;width:1px;height:1px;background:#9a9a9a;"></div>
<div class="r" style="left:295.78px;top:511.5px;width:1px;height:1px;background:#9a9a9a;"></div>
<div class="r" style="left:300.82px;top:511.5px;width:1px;height:1px;background:#9a9a9a;"></div>
<div class="r" style="left:305.86px;top:511.5px;width:1px;height:1px;background:#9a9a9a;"></div>
<div class="r" style="left:310.9px;top:511.5px;width:1px;height:1px;background:#9a9a9a;"></div>
<div class="r" style="left:315.94px;top:511.5px;width:1px;height:1px;background:#9a9a9a;"></div>
<div class="r" style="left:320.98px;top:511.5px;width:1px;height:1px;background:#9a9a9a;"></div>
<div class="r" style="left:326.02px;top:511.5px;width:1px;height:1px;background:#9a9a9a;"></div>
<div class="r" style="left:331.06px;top:511.5px;width:1px;height:1px;background:#9a9a9a;"></div>
<div class="r" style="left:336.1px;top:511.5px;width:1px;height:1px;background:#9a9a9a;"></div>
<div class="r" style="left:341.14px;top:511.5px;width:1px;height:1px;background:#9a9a9a;"></div>
<div class="r" style="left:346.18px;top:511.5px;width:1px;height:1px;background:#9a9a9a;"></div>
<div class="r" style="left:351.22px;top:511.5px;width:1px;height:1px;background:#9a9a9a;"></div>
<div class="r" style="left:356.26px;top:511.5px;width:1px;height:1px;background:#9a9a9a;"></div>
<div class="r" style="left:361.3px;top:511.5px;width:1px;height:1px;background:#9a9a9a;"></div>
<div class="r" style="left:366.34000000000003px;top:511.5px;width:1px;height:1px;background:#9a9a9a;"></div>
<div class="r" style="left:371.38px;top:511.5px;width:1px;height:1px;background:#9a9a9a;"></div>
<div class="r" style="left:376.42px;top:511.5px;width:1px;height:1px;background:#9a9a9a;"></div>
<div class="r" style="left:381.46000000000004px;top:511.5px;width:1px;height:1px;background:#9a9a9a;"></div>
<div class="r" style="left:386.5px;top:511.5px;width:1px;height:1px;background:#9a9a9a;"></div>
<div class="r" style="left:391.53999999999996px;top:511.5px;width:1px;height:1px;background:#9a9a9a;"></div>
<div class="r" style="left:396.58000000000004px;top:511.5px;width:1px;height:1px;background:#9a9a9a;"></div>
<div class="r" style="left:401.62px;top:511.5px;width:1px;height:1px;background:#9a9a9a;"></div>
<div class="r" style="left:406.65999999999997px;top:511.5px;width:1px;height:1px;background:#9a9a9a;"></div>
<div class="r" style="left:411.7px;top:511.5px;width:1px;height:1px;background:#9a9a9a;"></div>
<div class="r" style="left:416.74px;top:511.5px;width:1px;height:1px;background:#9a9a9a;"></div>
<div class="r" style="left:421.78px;top:511.5px;width:1px;height:1px;background:#9a9a9a;"></div>
<div class="r" style="left:426.82px;top:511.5px;width:1px;height:1px;background:#9a9a9a;"></div>
<div class="r" style="left:431.86px;top:511.5px;width:1px;height:1px;background:#9a9a9a;"></div>
<div class="r" style="left:436.9px;top:511.5px;width:1px;height:1px;background:#9a9a9a;"></div>
<div class="r" style="left:441.94px;top:511.5px;width:1px;height:1px;background:#9a9a9a;"></div>
<div class="r" style="left:446.98px;top:511.5px;width:1px;height:1px;background:#9a9a9a;"></div>
<div class="r" style="left:452.02px;top:511.5px;width:1px;height:1px;background:#9a9a9a;"></div>
<div class="r" style="left:457.06px;top:511.5px;width:1px;height:1px;background:#9a9a9a;"></div>
<div class="r" style="left:462.1px;top:511.5px;width:1px;height:1px;background:#9a9a9a;"></div>
<div class="r" style="left:467.14px;top:511.5px;width:1px;height:1px;background:#9a9a9a;"></div>
<div class="r" style="left:472.18px;top:511.5px;width:1px;height:1px;background:#9a9a9a;"></div>
<div class="r" style="left:477.22px;top:511.5px;width:1px;height:1px;background:#9a9a9a;"></div>
<div class="r" style="left:482.26px;top:511.5px;width:1px;height:1px;background:#9a9a9a;"></div>
<div class="r" style="left:487.3px;top:511.5px;width:1px;height:1px;background:#9a9a9a;"></div>
<div class="r" style="left:492.34000000000003px;top:511.5px;width:1px;height:1px;background:#9a9a9a;"></div>
<div class="r" style="left:497.38px;top:511.5px;width:1px;height:1px;background:#9a9a9a;"></div>
<div class="r" style="left:502.42px;top:511.5px;width:1px;height:1px;background:#9a9a9a;"></div>
<div class="r" style="left:507.46000000000004px;top:511.5px;width:1px;height:1px;background:#9a9a9a;"></div>
<div class="t " id="f76" style="left:142.6px;top:143.94px;font-size:8.7px;line-height:11.309999999999999px;color:#253245;font-weight:bold;transform:scaleX(0.9223);transform-origin:0 50%;">標的型攻撃メール対応訓練実施キット&nbsp;&nbsp; 訓練メールパターン設定シート</div>
<svg style="left:0;top:0" width="140" height="170"><polygon points="30.70,135.46 36.68,139.53 36.68,147.67 30.70,151.74 24.72,147.67 24.72,139.53" fill="#e9e6da" stroke="#cfc9b0" stroke-width="0.60"/><polygon points="41.50,135.46 47.48,139.53 47.48,147.67 41.50,151.74 35.52,147.67 35.52,139.53" fill="#e9e6da" stroke="#cfc9b0" stroke-width="0.60"/><polygon points="52.30,135.46 58.28,139.53 58.28,147.67 52.30,151.74 46.32,147.67 46.32,139.53" fill="#e9e6da" stroke="#cfc9b0" stroke-width="0.60"/><polygon points="63.10,135.46 69.08,139.53 69.08,147.67 63.10,151.74 57.12,147.67 57.12,139.53" fill="#e9e6da" stroke="#cfc9b0" stroke-width="0.60"/><polygon points="73.90,135.46 79.88,139.53 79.88,147.67 73.90,151.74 67.92,147.67 67.92,139.53" fill="#e9e6da" stroke="#cfc9b0" stroke-width="0.60"/><polygon points="84.70,135.46 90.68,139.53 90.68,147.67 84.70,151.74 78.72,147.67 78.72,139.53" fill="#e9e6da" stroke="#cfc9b0" stroke-width="0.60"/><polygon points="95.50,135.46 101.48,139.53 101.48,147.67 95.50,151.74 89.52,147.67 89.52,139.53" fill="#e9e6da" stroke="#cfc9b0" stroke-width="0.60"/><polygon points="106.30,135.46 112.28,139.53 112.28,147.67 106.30,151.74 100.32,147.67 100.32,139.53" fill="#e9e6da" stroke="#cfc9b0" stroke-width="0.60"/><polygon points="36.10,145.06 42.08,149.13 42.08,157.27 36.10,161.34 30.12,157.27 30.12,149.13" fill="#e9e6da" stroke="#cfc9b0" stroke-width="0.60"/><polygon points="46.90,145.06 52.88,149.13 52.88,157.27 46.90,161.34 40.92,157.27 40.92,149.13" fill="#e9e6da" stroke="#cfc9b0" stroke-width="0.60"/><polygon points="57.70,145.06 63.68,149.13 63.68,157.27 57.70,161.34 51.72,157.27 51.72,149.13" fill="#e9e6da" stroke="#cfc9b0" stroke-width="0.60"/><polygon points="68.50,145.06 74.48,149.13 74.48,157.27 68.50,161.34 62.52,157.27 62.52,149.13" fill="#e9e6da" stroke="#cfc9b0" stroke-width="0.60"/><polygon points="79.30,145.06 85.28,149.13 85.28,157.27 79.30,161.34 73.32,157.27 73.32,149.13" fill="#e9e6da" stroke="#cfc9b0" stroke-width="0.60"/><polygon points="90.10,145.06 96.08,149.13 96.08,157.27 90.10,161.34 84.12,157.27 84.12,149.13" fill="#e9e6da" stroke="#cfc9b0" stroke-width="0.60"/><polygon points="100.90,145.06 106.88,149.13 106.88,157.27 100.90,161.34 94.92,157.27 94.92,149.13" fill="#e9e6da" stroke="#cfc9b0" stroke-width="0.60"/><polygon points="111.70,145.06 117.68,149.13 117.68,157.27 111.70,161.34 105.72,157.27 105.72,149.13" fill="#e9e6da" stroke="#cfc9b0" stroke-width="0.60"/><polygon points="122.50,145.06 128.48,149.13 128.48,157.27 122.50,161.34 116.52,157.27 116.52,149.13" fill="#e9e6da" stroke="#cfc9b0" stroke-width="0.60"/><polygon points="30.70,136.52 35.90,140.06 35.90,147.14 30.70,150.68 25.50,147.14 25.50,140.06" fill="#ead25e" stroke="#b9a45a" stroke-width="1.00"/><polygon points="41.50,136.52 46.70,140.06 46.70,147.14 41.50,150.68 36.30,147.14 36.30,140.06" fill="#121212" stroke="#b9a45a" stroke-width="1.00"/><polygon points="52.30,136.52 57.50,140.06 57.50,147.14 52.30,150.68 47.10,147.14 47.10,140.06" fill="#fbfbf6" stroke="#b9a45a" stroke-width="1.00"/><polygon points="63.10,136.52 68.30,140.06 68.30,147.14 63.10,150.68 57.90,147.14 57.90,140.06" fill="#ead25e" stroke="#b9a45a" stroke-width="1.00"/><polygon points="73.90,136.52 79.10,140.06 79.10,147.14 73.90,150.68 68.70,147.14 68.70,140.06" fill="#121212" stroke="#b9a45a" stroke-width="1.00"/><polygon points="84.70,136.52 89.90,140.06 89.90,147.14 84.70,150.68 79.50,147.14 79.50,140.06" fill="#fbfbf6" stroke="#b9a45a" stroke-width="1.00"/><polygon points="95.50,136.52 100.70,140.06 100.70,147.14 95.50,150.68 90.30,147.14 90.30,140.06" fill="#ead25e" stroke="#b9a45a" stroke-width="1.00"/><polygon points="106.30,136.52 111.50,140.06 111.50,147.14 106.30,150.68 101.10,147.14 101.10,140.06" fill="#121212" stroke="#b9a45a" stroke-width="1.00"/><polygon points="36.10,146.12 41.30,149.66 41.30,156.74 36.10,160.28 30.90,156.74 30.90,149.66" fill="#fbfbf6" stroke="#b9a45a" stroke-width="1.00"/><polygon points="46.90,146.12 52.10,149.66 52.10,156.74 46.90,160.28 41.70,156.74 41.70,149.66" fill="#ead25e" stroke="#b9a45a" stroke-width="1.00"/><polygon points="57.70,146.12 62.90,149.66 62.90,156.74 57.70,160.28 52.50,156.74 52.50,149.66" fill="#121212" stroke="#b9a45a" stroke-width="1.00"/><polygon points="68.50,146.12 73.70,149.66 73.70,156.74 68.50,160.28 63.30,156.74 63.30,149.66" fill="#fbfbf6" stroke="#b9a45a" stroke-width="1.00"/><polygon points="79.30,146.12 84.50,149.66 84.50,156.74 79.30,160.28 74.10,156.74 74.10,149.66" fill="#ead25e" stroke="#b9a45a" stroke-width="1.00"/><polygon points="90.10,146.12 95.30,149.66 95.30,156.74 90.10,160.28 84.90,156.74 84.90,149.66" fill="#121212" stroke="#b9a45a" stroke-width="1.00"/><polygon points="100.90,146.12 106.10,149.66 106.10,156.74 100.90,160.28 95.70,156.74 95.70,149.66" fill="#fbfbf6" stroke="#b9a45a" stroke-width="1.00"/><polygon points="111.70,146.12 116.90,149.66 116.90,156.74 111.70,160.28 106.50,156.74 106.50,149.66" fill="#ead25e" stroke="#b9a45a" stroke-width="1.00"/><polygon points="122.50,146.12 127.70,149.66 127.70,156.74 122.50,160.28 117.30,156.74 117.30,149.66" fill="#121212" stroke="#b9a45a" stroke-width="1.00"/><text x="30.70" y="146.41" font-size="7.4" fill="#333" stroke="#333" stroke-width="0.11" text-anchor="middle">標</text><text x="41.50" y="146.41" font-size="7.4" fill="#f2f2f2" stroke="#f2f2f2" stroke-width="0.11" text-anchor="middle">的</text><text x="52.30" y="146.41" font-size="7.4" fill="#333" stroke="#333" stroke-width="0.11" text-anchor="middle">型</text><text x="63.10" y="146.41" font-size="7.4" fill="#333" stroke="#333" stroke-width="0.11" text-anchor="middle">攻</text><text x="73.90" y="146.41" font-size="7.4" fill="#f2f2f2" stroke="#f2f2f2" stroke-width="0.11" text-anchor="middle">撃</text><text x="84.70" y="146.41" font-size="7.4" fill="#333" stroke="#333" stroke-width="0.11" text-anchor="middle">メ</text><text x="95.50" y="146.41" font-size="7.4" fill="#333" stroke="#333" stroke-width="0.11" text-anchor="middle">ー</text><text x="106.30" y="146.41" font-size="7.4" fill="#f2f2f2" stroke="#f2f2f2" stroke-width="0.11" text-anchor="middle">ル</text><text x="36.10" y="156.01" font-size="7.4" fill="#333" stroke="#333" stroke-width="0.11" text-anchor="middle">対</text><text x="46.90" y="156.01" font-size="7.4" fill="#333" stroke="#333" stroke-width="0.11" text-anchor="middle">応</text><text x="57.70" y="156.01" font-size="7.4" fill="#f2f2f2" stroke="#f2f2f2" stroke-width="0.11" text-anchor="middle">訓</text><text x="68.50" y="156.01" font-size="7.4" fill="#333" stroke="#333" stroke-width="0.11" text-anchor="middle">練</text><text x="79.30" y="156.01" font-size="7.4" fill="#333" stroke="#333" stroke-width="0.11" text-anchor="middle">実</text><text x="90.10" y="156.01" font-size="7.4" fill="#f2f2f2" stroke="#f2f2f2" stroke-width="0.11" text-anchor="middle">施</text><text x="100.90" y="156.01" font-size="7.4" fill="#333" stroke="#333" stroke-width="0.11" text-anchor="middle">キ</text><text x="111.70" y="156.01" font-size="7.4" fill="#333" stroke="#333" stroke-width="0.11" text-anchor="middle">ッ</text><text x="122.50" y="156.01" font-size="7.4" fill="#f2f2f2" stroke="#f2f2f2" stroke-width="0.11" text-anchor="middle">ト</text></svg>
<div class="r" style="left:548px;top:206px;width:136px;height:203px;box-shadow:0 0 3px rgba(0,0,0,0.25);"></div>
<div class="r" style="left:548.5px;top:206.5px;width:135px;height:202px;background:#f0f0f0;border:1px solid #bdbdbd;"></div>
<div class="r" style="left:549.5px;top:207.5px;width:133px;height:19px;background:#fdfdfd;"></div>
<div class="t ns" id="f77" style="left:554px;top:213.05px;font-size:7px;line-height:9.1px;color:#999;transform:scaleX(0.8782);transform-origin:0 50%;">標的型攻撃メール対応訓練実施キット</div>
<svg style="left:669px;top:211px" width="10" height="10"><path d="M1 1 L8 8 M8 1 L1 8" stroke="#999" stroke-width="0.8"/></svg>
<svg style="left:540px;top:220px" width="160" height="50"><polygon points="19.00,10.27 26.27,14.89 26.27,24.11 19.00,28.73 11.73,24.11 11.73,14.89" fill="#e9e6da" stroke="#cfc9b0" stroke-width="0.66"/><polygon points="32.10,10.27 39.37,14.89 39.37,24.11 32.10,28.73 24.83,24.11 24.83,14.89" fill="#e9e6da" stroke="#cfc9b0" stroke-width="0.66"/><polygon points="45.20,10.27 52.47,14.89 52.47,24.11 45.20,28.73 37.93,24.11 37.93,14.89" fill="#e9e6da" stroke="#cfc9b0" stroke-width="0.66"/><polygon points="58.30,10.27 65.57,14.89 65.57,24.11 58.30,28.73 51.03,24.11 51.03,14.89" fill="#e9e6da" stroke="#cfc9b0" stroke-width="0.66"/><polygon points="71.40,10.27 78.67,14.89 78.67,24.11 71.40,28.73 64.13,24.11 64.13,14.89" fill="#e9e6da" stroke="#cfc9b0" stroke-width="0.66"/><polygon points="84.50,10.27 91.77,14.89 91.77,24.11 84.50,28.73 77.23,24.11 77.23,14.89" fill="#e9e6da" stroke="#cfc9b0" stroke-width="0.66"/><polygon points="97.60,10.27 104.87,14.89 104.87,24.11 97.60,28.73 90.33,24.11 90.33,14.89" fill="#e9e6da" stroke="#cfc9b0" stroke-width="0.66"/><polygon points="110.70,10.27 117.97,14.89 117.97,24.11 110.70,28.73 103.43,24.11 103.43,14.89" fill="#e9e6da" stroke="#cfc9b0" stroke-width="0.66"/><polygon points="25.60,22.27 32.87,26.89 32.87,36.11 25.60,40.73 18.33,36.11 18.33,26.89" fill="#e9e6da" stroke="#cfc9b0" stroke-width="0.66"/><polygon points="38.70,22.27 45.97,26.89 45.97,36.11 38.70,40.73 31.43,36.11 31.43,26.89" fill="#e9e6da" stroke="#cfc9b0" stroke-width="0.66"/><polygon points="51.80,22.27 59.07,26.89 59.07,36.11 51.80,40.73 44.53,36.11 44.53,26.89" fill="#e9e6da" stroke="#cfc9b0" stroke-width="0.66"/><polygon points="64.90,22.27 72.17,26.89 72.17,36.11 64.90,40.73 57.63,36.11 57.63,26.89" fill="#e9e6da" stroke="#cfc9b0" stroke-width="0.66"/><polygon points="78.00,22.27 85.27,26.89 85.27,36.11 78.00,40.73 70.73,36.11 70.73,26.89" fill="#e9e6da" stroke="#cfc9b0" stroke-width="0.66"/><polygon points="91.10,22.27 98.37,26.89 98.37,36.11 91.10,40.73 83.83,36.11 83.83,26.89" fill="#e9e6da" stroke="#cfc9b0" stroke-width="0.66"/><polygon points="104.20,22.27 111.47,26.89 111.47,36.11 104.20,40.73 96.93,36.11 96.93,26.89" fill="#e9e6da" stroke="#cfc9b0" stroke-width="0.66"/><polygon points="117.30,22.27 124.57,26.89 124.57,36.11 117.30,40.73 110.03,36.11 110.03,26.89" fill="#e9e6da" stroke="#cfc9b0" stroke-width="0.66"/><polygon points="130.40,22.27 137.67,26.89 137.67,36.11 130.40,40.73 123.13,36.11 123.13,26.89" fill="#e9e6da" stroke="#cfc9b0" stroke-width="0.66"/><polygon points="19.00,11.36 25.41,15.43 25.41,23.57 19.00,27.64 12.59,23.57 12.59,15.43" fill="#ead25e" stroke="#b9a45a" stroke-width="1.10"/><polygon points="32.10,11.36 38.51,15.43 38.51,23.57 32.10,27.64 25.69,23.57 25.69,15.43" fill="#121212" stroke="#b9a45a" stroke-width="1.10"/><polygon points="45.20,11.36 51.61,15.43 51.61,23.57 45.20,27.64 38.79,23.57 38.79,15.43" fill="#fbfbf6" stroke="#b9a45a" stroke-width="1.10"/><polygon points="58.30,11.36 64.71,15.43 64.71,23.57 58.30,27.64 51.89,23.57 51.89,15.43" fill="#ead25e" stroke="#b9a45a" stroke-width="1.10"/><polygon points="71.40,11.36 77.81,15.43 77.81,23.57 71.40,27.64 64.99,23.57 64.99,15.43" fill="#121212" stroke="#b9a45a" stroke-width="1.10"/><polygon points="84.50,11.36 90.91,15.43 90.91,23.57 84.50,27.64 78.09,23.57 78.09,15.43" fill="#fbfbf6" stroke="#b9a45a" stroke-width="1.10"/><polygon points="97.60,11.36 104.01,15.43 104.01,23.57 97.60,27.64 91.19,23.57 91.19,15.43" fill="#ead25e" stroke="#b9a45a" stroke-width="1.10"/><polygon points="110.70,11.36 117.11,15.43 117.11,23.57 110.70,27.64 104.29,23.57 104.29,15.43" fill="#121212" stroke="#b9a45a" stroke-width="1.10"/><polygon points="25.60,23.36 32.01,27.43 32.01,35.57 25.60,39.64 19.19,35.57 19.19,27.43" fill="#fbfbf6" stroke="#b9a45a" stroke-width="1.10"/><polygon points="38.70,23.36 45.11,27.43 45.11,35.57 38.70,39.64 32.29,35.57 32.29,27.43" fill="#ead25e" stroke="#b9a45a" stroke-width="1.10"/><polygon points="51.80,23.36 58.21,27.43 58.21,35.57 51.80,39.64 45.39,35.57 45.39,27.43" fill="#121212" stroke="#b9a45a" stroke-width="1.10"/><polygon points="64.90,23.36 71.31,27.43 71.31,35.57 64.90,39.64 58.49,35.57 58.49,27.43" fill="#fbfbf6" stroke="#b9a45a" stroke-width="1.10"/><polygon points="78.00,23.36 84.41,27.43 84.41,35.57 78.00,39.64 71.59,35.57 71.59,27.43" fill="#ead25e" stroke="#b9a45a" stroke-width="1.10"/><polygon points="91.10,23.36 97.51,27.43 97.51,35.57 91.10,39.64 84.69,35.57 84.69,27.43" fill="#121212" stroke="#b9a45a" stroke-width="1.10"/><polygon points="104.20,23.36 110.61,27.43 110.61,35.57 104.20,39.64 97.79,35.57 97.79,27.43" fill="#fbfbf6" stroke="#b9a45a" stroke-width="1.10"/><polygon points="117.30,23.36 123.71,27.43 123.71,35.57 117.30,39.64 110.89,35.57 110.89,27.43" fill="#ead25e" stroke="#b9a45a" stroke-width="1.10"/><polygon points="130.40,23.36 136.81,27.43 136.81,35.57 130.40,39.64 123.99,35.57 123.99,27.43" fill="#121212" stroke="#b9a45a" stroke-width="1.10"/><text x="19.00" y="23.00" font-size="9.2" fill="#333" stroke="#333" stroke-width="0.14" text-anchor="middle">標</text><text x="32.10" y="23.00" font-size="9.2" fill="#f2f2f2" stroke="#f2f2f2" stroke-width="0.14" text-anchor="middle">的</text><text x="45.20" y="23.00" font-size="9.2" fill="#333" stroke="#333" stroke-width="0.14" text-anchor="middle">型</text><text x="58.30" y="23.00" font-size="9.2" fill="#333" stroke="#333" stroke-width="0.14" text-anchor="middle">攻</text><text x="71.40" y="23.00" font-size="9.2" fill="#f2f2f2" stroke="#f2f2f2" stroke-width="0.14" text-anchor="middle">撃</text><text x="84.50" y="23.00" font-size="9.2" fill="#333" stroke="#333" stroke-width="0.14" text-anchor="middle">メ</text><text x="97.60" y="23.00" font-size="9.2" fill="#333" stroke="#333" stroke-width="0.14" text-anchor="middle">ー</text><text x="110.70" y="23.00" font-size="9.2" fill="#f2f2f2" stroke="#f2f2f2" stroke-width="0.14" text-anchor="middle">ル</text><text x="25.60" y="35.00" font-size="9.2" fill="#333" stroke="#333" stroke-width="0.14" text-anchor="middle">対</text><text x="38.70" y="35.00" font-size="9.2" fill="#333" stroke="#333" stroke-width="0.14" text-anchor="middle">応</text><text x="51.80" y="35.00" font-size="9.2" fill="#f2f2f2" stroke="#f2f2f2" stroke-width="0.14" text-anchor="middle">訓</text><text x="64.90" y="35.00" font-size="9.2" fill="#333" stroke="#333" stroke-width="0.14" text-anchor="middle">練</text><text x="78.00" y="35.00" font-size="9.2" fill="#333" stroke="#333" stroke-width="0.14" text-anchor="middle">実</text><text x="91.10" y="35.00" font-size="9.2" fill="#f2f2f2" stroke="#f2f2f2" stroke-width="0.14" text-anchor="middle">施</text><text x="104.20" y="35.00" font-size="9.2" fill="#333" stroke="#333" stroke-width="0.14" text-anchor="middle">キ</text><text x="117.30" y="35.00" font-size="9.2" fill="#333" stroke="#333" stroke-width="0.14" text-anchor="middle">ッ</text><text x="130.40" y="35.00" font-size="9.2" fill="#f2f2f2" stroke="#f2f2f2" stroke-width="0.14" text-anchor="middle">ト</text></svg>
<div class="r" style="left:554px;top:266px;width:124.5px;height:27px;background:#efefef;border:1px solid #3a3a3a;"></div>
<div class="t " id="f78" style="left:616px;top:275.11px;font-size:8.6px;line-height:11.18px;color:#333;transform:translateX(-50%) scaleX(0.8535);transform-origin:50% 50%;">添付ファイルを作成する</div>
<div class="r" style="left:554px;top:293px;width:124px;height:28px;background:#efefef;border-top:1px solid #fff;border-left:1px solid #fff;border-right:1.2px solid #555;border-bottom:1.2px solid #555;"></div>
<div class="t " id="f79" style="left:616px;top:302.61px;font-size:8.6px;line-height:11.18px;color:#333;transform:translateX(-50%) scaleX(0.8944);transform-origin:50% 50%;">訓練メールを送信する</div>
<div class="r" style="left:554px;top:321px;width:124px;height:27.5px;background:#efefef;border-top:1px solid #fff;border-left:1px solid #fff;border-right:1.2px solid #555;border-bottom:1.2px solid #555;"></div>
<div class="t " id="f80" style="left:616px;top:330.36px;font-size:8.6px;line-height:11.18px;color:#333;transform:translateX(-50%) scaleX(0.9611);transform-origin:50% 50%;">開封者情報を集計する</div>
<div class="r" style="left:554px;top:348.5px;width:124px;height:27.5px;background:#efefef;border-top:1px solid #fff;border-left:1px solid #fff;border-right:1.2px solid #555;border-bottom:1.2px solid #555;"></div>
<div class="t " id="f81" style="left:616px;top:357.86px;font-size:8.6px;line-height:11.18px;color:#333;transform:translateX(-50%) scaleX(0.8846);transform-origin:50% 50%;">特定用キーワードを生成する</div>
<div class="r" style="left:554px;top:376px;width:124px;height:27.5px;background:#efefef;border-top:1px solid #fff;border-left:1px solid #fff;border-right:1.2px solid #555;border-bottom:1.2px solid #555;"></div>
<div class="t " id="f82" style="left:616px;top:385.36px;font-size:8.6px;line-height:11.18px;color:#333;transform:translateX(-50%) scaleX(0.8750);transform-origin:50% 50%;">ツールを終了する</div>
</body></html>
